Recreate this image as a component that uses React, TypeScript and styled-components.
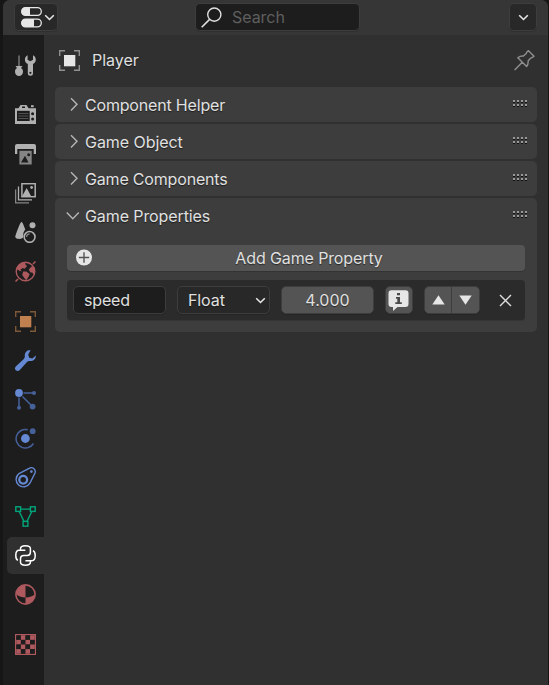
import React from "react";
import styled, { createGlobalStyle, css } from "styled-components";

const GlobalStyle = createGlobalStyle`
  * { box-sizing: border-box; }
  html, body { margin: 0; background: #161616; }
  body {
    font-family: Inter, "Noto Sans", sans-serif;
    font-size: 16px;
    line-height: 20px;
    color: #e0e0e0;
    overflow: hidden;
  }
  svg { display: block; flex: none; }
`;

const Editor = styled.div`
  display: flex;
  flex-direction: column;
  width: 545px;
  height: 685px;
  margin-left: 3px;
  background: #303030;
  border-radius: 7px 7px 0 0;
  overflow: hidden;
`;

const Header = styled.header`
  display: flex;
  align-items: flex-start;
  justify-content: space-between;
  height: 35px;
  flex: none;
  padding: 3px 11px 0;
  background: #363636;
`;

const widget = css`
  display: flex;
  align-items: center;
  height: 28px;
  border: 1px solid #3d3d3d;
  border-radius: 5px;
  box-shadow: 0 1px 0 rgba(0, 0, 0, 0.12);
`;

const MenuButton = styled.button<{ $width: number; $inset?: number }>`
  ${widget}
  justify-content: center;
  gap: 2px;
  width: ${(p) => p.$width}px;
  padding: 0 0 0 ${(p) => p.$inset ?? 0}px;
  background: #282828;
  color: #e6e6e6;
`;

const SearchBox = styled.label`
  ${widget}
  width: 165px;
  margin-left: 2px;
  margin-right: 14px;
  padding-left: 5px;
  gap: 10px;
  background: #1d1d1d;
  color: #5f5f5f;
  letter-spacing: -0.05px;
`;

const Body = styled.div`
  display: flex;
  flex: 1;
`;

const Tabs = styled.nav`
  display: flex;
  flex-direction: column;
  gap: 13px;
  width: 41px;
  padding: 12px 0 0 4px;
  background: #1d1d1d;
`;

const TabGroup = styled.div`
  display: flex;
  flex-direction: column;
  gap: 2px;
`;

const Tab = styled.button<{ $active?: boolean }>`
  display: flex;
  align-items: center;
  height: 37px;
  padding: 0 0 0 8px;
  border: 0;
  border-radius: 5px 0 0 5px;
  background: ${(p) => (p.$active ? "#303030" : "transparent")};
`;

const Content = styled.main`
  display: flex;
  flex-direction: column;
  gap: 2px;
  flex: 1;
  padding: 0 11px;
`;

const Context = styled.div`
  display: flex;
  align-items: center;
  height: 50px;
  padding: 0 2px 0 4px;
`;

const Label = styled.span<{ $spacing?: number }>`
  letter-spacing: ${(p) => p.$spacing ?? 0}px;
  text-shadow: 0 1px 1px rgba(0, 0, 0, 0.55);
  white-space: nowrap;
`;

const ContextName = styled(Label)`
  flex: 1;
  margin-left: 12px;
`;

const Panel = styled.section`
  background: #3d3d3d;
  border-radius: 5px;
`;

const PanelHeader = styled.div`
  display: flex;
  align-items: center;
  height: 35px;
  padding: 0 9px 0 11px;
`;

const PanelTitle = styled(Label)`
  flex: 1;
  margin-left: 4px;
`;

const PanelBody = styled.div`
  display: flex;
  flex-direction: column;
  gap: 9px;
  padding: 12px 12px;
`;

const AddButton = styled.button`
  display: grid;
  grid-template-columns: 18px 1fr;
  align-items: center;
  height: 26px;
  padding: 0 0 0 8px;
  border: 0;
  border-radius: 4px;
  background: #545454;
  box-shadow: 0 1px 0 rgba(0, 0, 0, 0.15);
  color: #e0e0e0;
  font: inherit;
  text-align: center;
`;

const PropertyRow = styled.div`
  display: flex;
  align-items: center;
  gap: 11px;
  height: 40px;
  padding: 0 6px;
  border-radius: 4px;
  background: #2b2b2b;
  box-shadow: 0 1px 0 #353535;
`;

const Field = styled.div<{ $kind: "text" | "menu" | "number" }>`
  ${widget}
  width: 93px;
  padding: 0 3px 0 10px;
  justify-content: space-between;
  background: ${(p) => ({ text: "#1d1d1d", menu: "#282828", number: "#545454" })[p.$kind]};
  ${(p) => p.$kind === "number" && "justify-content: center; padding: 0;"}
`;

const IconButton = styled.button`
  ${widget}
  justify-content: flex-start;
  width: 28px;
  padding: 0 0 0 2px;
  background: #545454;
`;

const ButtonPair = styled.div`
  ${widget}
  width: 56px;
  background: #545454;
`;

const HalfButton = styled.button`
  display: flex;
  align-items: center;
  justify-content: center;
  width: 26px;
  height: 26px;
  padding: 0;
  border: 0;
  background: none;
  & + & { width: 28px; border-left: 1px solid #3d3d3d; padding-right: 1px; }
`;

const CloseButton = styled(HalfButton)`
  margin-left: 1px;
`;

const Icon = ({ children, size = 21 }: { children: React.ReactNode; size?: number }) => (
  <svg width={size} height={size} viewBox={`0 0 ${size} ${size}`} fill="none">
    {children}
  </svg>
);

const GREY = "#b0b0b0";
const RED = "#ad595e";
const BLUE = "#6488d2";
const DIM_BLUE = "#46609a";
const GREEN = "#00a67b";

const ChevronDown = () => (
  <svg width="11" height="10" viewBox="0 0 11 10" fill="none">
    <path d="M1.2 3.3L5.5 7.5L9.8 3.3" stroke="#e6e6e6" strokeWidth="1.6" />
  </svg>
);

const PropertiesIcon = () => (
  <Icon>
    <rect x="0.7" y="0.7" width="19.6" height="7.6" rx="3.8" stroke="#e6e6e6" strokeWidth="1.3" />
    <path d="M9 0.5H4.5a4 4 0 0 0 0 8H9z" fill="#e6e6e6" />
    <rect x="0.7" y="12.2" width="19.6" height="7.6" rx="3.8" stroke="#e6e6e6" strokeWidth="1.3" />
    <path d="M13 12H4.5a4 4 0 0 0 0 8H13z" fill="#e6e6e6" />
  </Icon>
);

const SearchIcon = () => (
  <Icon>
    <circle cx="13.3" cy="7.6" r="6.6" stroke="#e0e0e0" strokeWidth="1.4" />
    <path d="M8.6 12.4L0.7 20.3" stroke="#e0e0e0" strokeWidth="1.6" />
  </Icon>
);

const ObjectIcon = ({ color, frame }: { color: string; frame: string }) => (
  <Icon>
    <path d="M0.7 6V0.7H6M15 0.7H20.3V6M20.3 15V20.3H15M6 20.3H0.7V15" stroke={frame} strokeWidth="1.4" />
    <rect x="5" y="5" width="11.3" height="11.3" fill={color} />
  </Icon>
);

const PinIcon = () => (
  <Icon>
    <path d="M14.5 0.7L20 6.2C18.6 7.5 17.8 7.8 16.8 8.1L14.2 10.8C14.3 13 14 14.8 12.6 16.5L3.8 7.7C5.6 6.3 7.2 5.9 9.4 6.1L12.2 3.5C12.5 2.3 13.2 1.5 14.5 0.7ZM8.3 12.3L0.6 20" stroke="#8f8f8f" strokeWidth="1.4" strokeLinejoin="round" />
  </Icon>
);

const ToolIcon = () => (
  <Icon>
    <path d="M4 0.5V11" stroke="#858585" strokeWidth="1.3" />
    <path d="M0.5 11H7.5L6 13.1C7.4 14 8 15 8 16.7C8 19.2 6.3 21 4 21S0 19.2 0 16.7C0 15 0.6 14 2 13.1Z" fill={GREY} />
    <path fillRule="evenodd" d="M12.6 0.2V4.7L15.3 6.3L18 4.7V0.2C19.8 1 20.8 2.6 20.8 4.7C20.8 6.7 19.7 8.2 18 9V18.3Q18 20.8 15.4 20.8Q12.8 20.8 12.8 18.3V9C11 8.2 9.9 6.7 9.9 4.7C9.9 2.6 10.9 1 12.6 0.2ZM15.4 16.7A1 1 0 1 0 15.4 18.9A1 1 0 1 0 15.4 16.7Z" fill={GREY} />
  </Icon>
);

const RenderIcon = () => (
  <Icon>
    <path d="M0 3.2H3.5L5.5 0H11.5L13.5 3.2H21V19H0ZM7 1.5V3H10V1.5Z" fill={GREY} fillRule="evenodd" />
    <rect x="16" y="0.2" width="2.7" height="2" fill={GREY} />
    <rect x="2" y="5.8" width="12.7" height="10.2" fill="#1d1d1d" />
    <path d="M3.3 8.5H13.4M3.3 11H13.4M3.3 13.5H13.4" stroke="#505050" />
    <circle cx="17.6" cy="8.7" r="1.5" fill="#1d1d1d" />
    <circle cx="17.6" cy="14" r="1.5" fill="#1d1d1d" />
  </Icon>
);

const OutputIcon = () => (
  <Icon>
    <path d="M2 0H19Q21 0 21 2V10H18.7V5H2.3V10H0V2Q0 0 2 0Z" fill={GREY} />
    <path d="M4.4 6.8H16.7V20.5H4.4Z" fill="#858585" />
    <path d="M6 18.5L10 11.8L13.5 18.5Z" fill="#1d1d1d" />
    <circle cx="13.7" cy="10.8" r="1.5" fill="#1d1d1d" />
  </Icon>
);

const ViewLayerIcon = () => (
  <Icon>
    <path d="M0.6 6.5V19.9H14" stroke="#858585" strokeWidth="1.3" />
    <path d="M3.5 3.5V16.9H17" stroke={GREY} strokeWidth="1.3" />
    <rect x="6.9" y="0.7" width="13.3" height="13" stroke={GREY} strokeWidth="1.5" />
    <path d="M7.5 12.5L11.7 5L16 13H7.5Z" fill={GREY} />
    <circle cx="16.6" cy="4.5" r="1.4" fill={GREY} />
  </Icon>
);

const SceneIcon = () => (
  <Icon>
    <path d="M6.5 0C7.4 0 8.3 2.2 10.3 7.6C8.6 9.5 8 11.6 8.2 14.8C8.2 17.8 0 17.6 0.2 14.4C2.2 9 5 0 6.5 0Z" fill={GREY} />
    <circle cx="17.5" cy="3.3" r="3" fill={GREY} />
    <circle cx="14.6" cy="14.9" r="5.4" stroke={GREY} strokeWidth="1.6" />
    <path d="M11.5 15A3.2 3.2 0 0 1 14.6 11.8" stroke="#858585" strokeWidth="1.3" />
  </Icon>
);

const WorldIcon = () => (
  <Icon>
    <circle cx="10.5" cy="10.5" r="9.3" stroke={RED} strokeWidth="1.4" />
    <path d="M0.5 20.5L3 18M18 3L20.5 0.5" stroke={RED} strokeWidth="1.5" />
    <path d="M3 5C5 2 8 0.8 11 1.2L10 3L12 5L9.7 7.7L7.5 7L5.2 9L7 10.3L4.7 10L1.5 7.8Z" fill={RED} />
    <path d="M8.2 10.4L11.3 10.6L14.6 13L13.7 15.6L11.2 19.2L9.3 17L7.2 14Z" fill={RED} />
    <path d="M19.5 6.3L16.5 5.5L13.8 8.4L15.2 11.2L17.7 11.7L18.2 14L19.8 11Z" fill={RED} />
  </Icon>
);

const WrenchIcon = () => (
  <Icon>
    <path d="M15.6 0.3C12.3 -0.2 9.6 2.2 9.8 5.6C9.9 7 9.7 8 8.8 8.9L1 16.2C-0.3 17.5 -0.3 19 0.8 20.2C2 21.3 3.6 21.2 4.8 20L12 12.1C12.9 11.2 14 11.1 15.3 11.1C18.6 11.2 21.2 8.8 20.8 5.4L17.4 8.5L14.2 7.8L13.2 4.6Z" fill={BLUE} />
  </Icon>
);

const ParticlesIcon = () => (
  <Icon>
    <path d="M8.5 4H18M4 8.5V18M7.5 7.5L17 17" stroke={DIM_BLUE} strokeWidth="1.5" />
    <circle cx="4" cy="4" r="3.9" fill={BLUE} />
    <circle cx="19" cy="4" r="2" fill={DIM_BLUE} />
    <circle cx="4" cy="18.7" r="2" fill={DIM_BLUE} />
    <circle cx="17.6" cy="17.6" r="2.9" fill={DIM_BLUE} />
  </Icon>
);

const PhysicsIcon = () => (
  <Icon>
    <path d="M12.7 1.7A9.3 9.3 0 1 0 18.4 15.5" stroke={DIM_BLUE} strokeWidth="1.5" />
    <circle cx="10.4" cy="10.5" r="4.4" fill={BLUE} />
    <circle cx="17.7" cy="3.2" r="2.9" fill={DIM_BLUE} />
  </Icon>
);

const ConstraintIcon = () => (
  <Icon>
    <path d="M4 6.6L14.6 1.1C17.8 -0.4 21.2 2.6 20 6L14.9 16.2A7.4 7.4 0 1 1 4 6.6Z" stroke={BLUE} strokeWidth="1.4" />
    <circle cx="8.2" cy="12.7" r="3.9" stroke={BLUE} strokeWidth="2.3" />
    <circle cx="16.4" cy="4.6" r="1.3" fill={BLUE} />
  </Icon>
);

const MeshIcon = () => (
  <Icon>
    <path d="M5.5 3.1H15.5M4.2 5.5L9 15.4M16.8 5.5L12 15.4" stroke={GREEN} strokeWidth="1.4" />
    <rect x="0.8" y="0.8" width="4.8" height="4.6" stroke={GREEN} strokeWidth="1.4" />
    <rect x="15.4" y="0.8" width="4.8" height="4.6" stroke={GREEN} strokeWidth="1.4" />
    <rect x="8.1" y="15.4" width="4.8" height="4.8" stroke={GREEN} strokeWidth="1.4" />
  </Icon>
);

const PythonIcon = () => (
  <Icon>
    <path d="M5.5 5V3.6C5.5 1.8 7 0.8 10.4 0.8S15.4 1.8 15.4 3.6V7.2C15.4 9.2 14.2 10.4 12.2 10.4H8.8C6.8 10.4 5.5 11.7 5.5 13.7V17.3C5.5 19.2 7 20.2 10.4 20.2S15.4 19.2 15.4 17.3V16" stroke="#fff" strokeWidth="1.5" />
    <path d="M10.4 5.3H4.1C1.8 5.3 0.8 7.2 0.8 10.4C0.8 12.8 1.5 14.7 2.9 15.4M10.4 15.7H16.8C19.1 15.7 20.2 13.8 20.2 10.5C20.2 8.1 19.5 6.3 18 5.6" stroke="#fff" strokeWidth="1.5" />
  </Icon>
);

const MaterialIcon = () => (
  <Icon>
    <circle cx="10.5" cy="10.5" r="9.6" stroke={RED} strokeWidth="1.6" />
    <path d="M10.5 10.5V13.4C7 13.4 4 12.4 1.2 10.5C1.2 5 5.5 1.2 10.5 1.2ZM10.5 13.4C14 13.4 17 12.4 19.8 10.5C19.8 16 15.8 19.8 10.5 19.8Z" fill={RED} />
  </Icon>
);

const TextureIcon = () => (
  <Icon>
    <rect x="0.7" y="0.7" width="19.6" height="19.6" stroke={RED} strokeWidth="1.4" />
    {[0, 1, 2, 3].flatMap((row) =>
      [0, 1, 2, 3].map((col) => (
        <rect
          key={`${row}-${col}`}
          x={1.3 + col * 4.6}
          y={1.3 + row * 4.6}
          width="4.6"
          height="4.6"
          fill={(row + col) % 2 === 1 ? RED : "#1d1d1d"}
        />
      )),
    )}
  </Icon>
);

const Disclosure = ({ open }: { open?: boolean }) => (
  <svg width="15" height="15" viewBox="0 0 15 15" fill="none">
    <path d={open ? "M0.8 4.6L6.8 10.8L12.8 4.6" : "M5 1.2L11 7.3L5 13.4"} stroke="#b5b5b5" strokeWidth="1.4" />
  </svg>
);

const Grip = () => (
  <svg width="16" height="9" viewBox="0 0 16 9">
    {[0, 4, 8, 12].flatMap((x) =>
      [0, 4].map((y) => (
        <g key={`${x}-${y}`}>
          <rect x={x + 1} y={y + 2} width="2" height="1" fill="#111" />
          <rect x={x + 1} y={y} width="2" height="2" fill="#999" />
        </g>
      )),
    )}
  </svg>
);

const AddIcon = () => (
  <Icon size={18}>
    <circle cx="9" cy="8.5" r="8" fill="#e6e6e6" />
    <path d="M3.8 8.5H14.2M9 3.3V13.7" stroke="#545454" strokeWidth="1.4" />
  </Icon>
);

const InfoIcon = () => (
  <Icon>
    <path d="M3.5 0.3H17.5Q20.5 0.3 20.5 3.3V14Q20.5 17 17.5 17H9.5L5 21V17H3.5Q0.5 17 0.5 14V3.3Q0.5 0.3 3.5 0.3Z" fill="#e6e6e6" />
    <path d="M9 3H12V5.3H9ZM8 7H12V12.2H13.8V14H7.3V12.2H9.3V8.8H8Z" fill="#4a4a4a" />
  </Icon>
);

const Arrow = ({ down }: { down?: boolean }) => (
  <svg width="13" height="10" viewBox="0 0 13 10">
    <path d={down ? "M0.3 0.5H12.7L6.5 9.7Z" : "M0.3 9.5H12.7L6.5 0.3Z"} fill="#e6e6e6" />
  </svg>
);

const CloseIcon = () => (
  <Icon size={13}>
    <path d="M1 1L12 12M12 1L1 12" stroke="#dedede" strokeWidth="1.4" />
  </Icon>
);

const tabGroups: { id: string; icon: React.ReactNode }[][] = [
  [{ id: "tool", icon: <ToolIcon /> }],
  [
    { id: "render", icon: <RenderIcon /> },
    { id: "output", icon: <OutputIcon /> },
    { id: "view-layer", icon: <ViewLayerIcon /> },
    { id: "scene", icon: <SceneIcon /> },
    { id: "world", icon: <WorldIcon /> },
  ],
  [
    { id: "object", icon: <ObjectIcon color="#c08050" frame="#7d5839" /> },
    { id: "modifiers", icon: <WrenchIcon /> },
    { id: "particles", icon: <ParticlesIcon /> },
    { id: "physics", icon: <PhysicsIcon /> },
    { id: "constraints", icon: <ConstraintIcon /> },
    { id: "data", icon: <MeshIcon /> },
    { id: "game", icon: <PythonIcon /> },
    { id: "material", icon: <MaterialIcon /> },
  ],
  [{ id: "texture", icon: <TextureIcon /> }],
];

const closedPanels = [
  { title: "Component Helper", spacing: -0.18 },
  { title: "Game Object", spacing: -0.06 },
  { title: "Game Components", spacing: -0.18 },
];

const PanelHead = ({ title, open, spacing }: { title: string; open?: boolean; spacing: number }) => (
  <PanelHeader>
    <Disclosure open={open} />
    <PanelTitle $spacing={spacing}>{title}</PanelTitle>
    <Grip />
  </PanelHeader>
);

export default function App() {
  return (
    <>
      <GlobalStyle />
      <Editor>
        <Header>
          <MenuButton $width={44} $inset={3}>
            <PropertiesIcon />
            <ChevronDown />
          </MenuButton>
          <SearchBox>
            <SearchIcon />
            Search
          </SearchBox>
          <MenuButton $width={28}>
            <ChevronDown />
          </MenuButton>
        </Header>
        <Body>
          <Tabs>
            {tabGroups.map((group) => (
              <TabGroup key={group[0].id}>
                {group.map((tab) => (
                  <Tab key={tab.id} $active={tab.id === "game"}>
                    {tab.icon}
                  </Tab>
                ))}
              </TabGroup>
            ))}
          </Tabs>
          <Content>
            <Context>
              <ObjectIcon color="#e6e6e6" frame="#8f8f8f" />
              <ContextName>Player</ContextName>
              <PinIcon />
            </Context>
            {closedPanels.map(({ title, spacing }) => (
              <Panel key={title}>
                <PanelHead title={title} spacing={spacing} />
              </Panel>
            ))}
            <Panel>
              <PanelHead title="Game Properties" spacing={-0.1} open />
              <PanelBody>
                <AddButton>
                  <AddIcon />
                  <Label $spacing={-0.12}>Add Game Property</Label>
                </AddButton>
                <PropertyRow>
                  <Field $kind="text">
                    <Label $spacing={-0.15}>speed</Label>
                  </Field>
                  <Field $kind="menu">
                    <Label $spacing={-0.1}>Float</Label>
                    <ChevronDown />
                  </Field>
                  <Field $kind="number">
                    <Label>4.000</Label>
                  </Field>
                  <IconButton>
                    <InfoIcon />
                  </IconButton>
                  <ButtonPair>
                    <HalfButton>
                      <Arrow />
                    </HalfButton>
                    <HalfButton>
                      <Arrow down />
                    </HalfButton>
                  </ButtonPair>
                  <CloseButton>
                    <CloseIcon />
                  </CloseButton>
                </PropertyRow>
              </PanelBody>
            </Panel>
          </Content>
        </Body>
      </Editor>
    </>
  );
}
